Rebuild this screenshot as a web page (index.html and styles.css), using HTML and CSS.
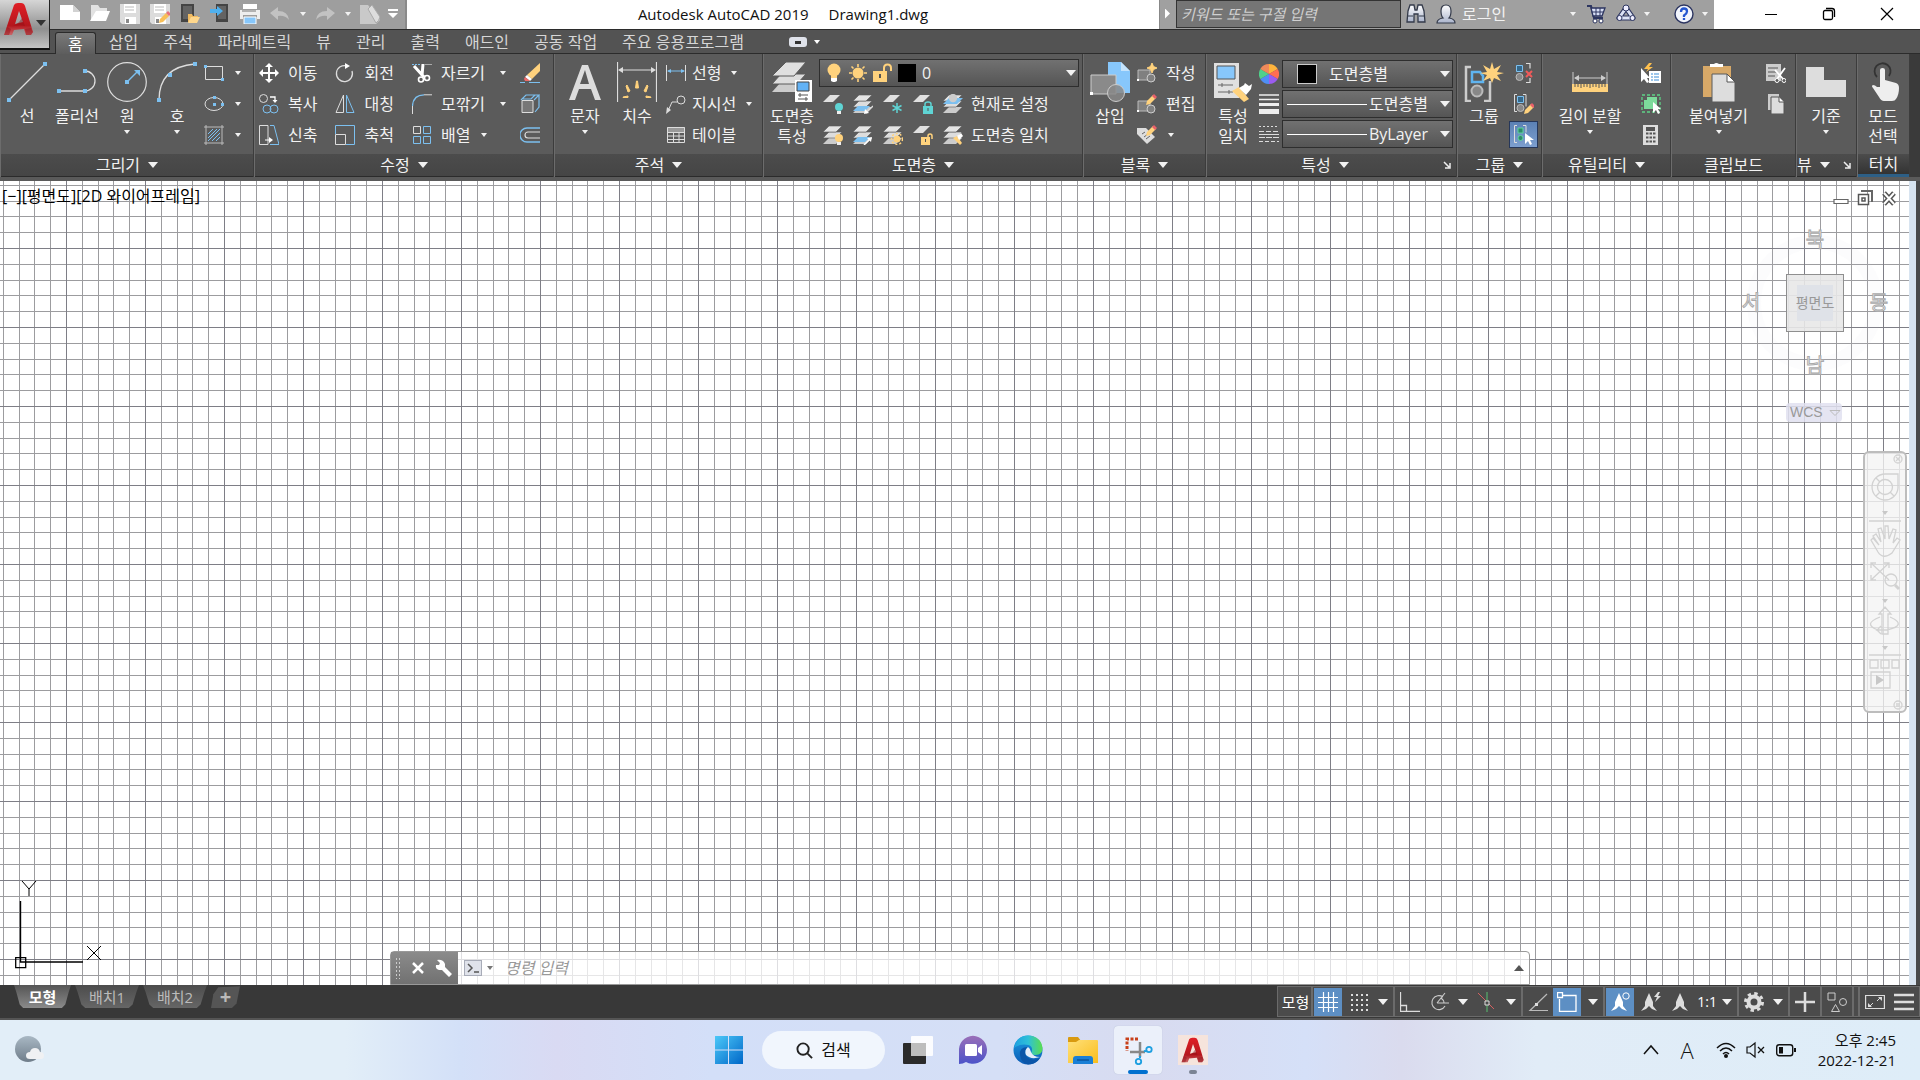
FILE: index.html
```html
<!DOCTYPE html>
<html lang="ko">
<head>
<meta charset="utf-8">
<title>Autodesk AutoCAD 2019 - Drawing1.dwg</title>
<link rel="stylesheet" href="styles.css">
</head>
<body>
<svg class="sprite" aria-hidden="true">
  <defs>
    <linearGradient id="gred" x1="0" y1="0" x2="0" y2="1"><stop offset="0" stop-color="#e01f26"/><stop offset=".7" stop-color="#b5161d"/><stop offset="1" stop-color="#c9686a"/></linearGradient>
    <linearGradient id="gwin" x1="0" y1="0" x2="1" y2="1"><stop offset="0" stop-color="#4cc8f8"/><stop offset="1" stop-color="#0067c8"/></linearGradient>
    <linearGradient id="gchat" x1="0" y1="0" x2="0" y2="1"><stop offset="0" stop-color="#9a6fb8"/><stop offset="1" stop-color="#4b53c9"/></linearGradient>
    <linearGradient id="gedge" x1="0" y1="0" x2="1" y2="0"><stop offset="0" stop-color="#1d9fe0"/><stop offset=".5" stop-color="#2fc0d8"/><stop offset="1" stop-color="#5ade4e"/></linearGradient>
    <linearGradient id="gedge2" x1="0" y1="0" x2="0" y2="1"><stop offset="0" stop-color="#1b9de2"/><stop offset="1" stop-color="#0c5bb5"/></linearGradient>
    <linearGradient id="gfold" x1="0" y1="0" x2="1" y2="1"><stop offset="0" stop-color="#ffe07a"/><stop offset="1" stop-color="#f9bd1c"/></linearGradient>
    <linearGradient id="gmoon" x1="0" y1="0" x2="0" y2="1"><stop offset="0" stop-color="#a9b8c4"/><stop offset="1" stop-color="#6f7d8a"/></linearGradient>
    <linearGradient id="gsteel" x1="0" y1="0" x2="0" y2="1"><stop offset="0" stop-color="#fff"/><stop offset="1" stop-color="#aab4cc"/></linearGradient>
  </defs>
  <symbol id="logo" viewBox="0 0 32 34"><path d="M1 33 11 3q1-2 4-2h3q3 0 4 3l8 26-2 3h-5l-2-6-10 1-2 5zm11-11 8-2-4-11z" fill="url(#gred)"/><path d="M7 25q7-1 12-9l3 8q-6-2-15 1zM1 33l3-8 4 2-2 6zM23 33l-1-6 6-1 2 4-2 3z" fill="#8e0f16" opacity=".45"/></symbol>
  <symbol id="dn" viewBox="0 0 6 4"><path d="M0 0h6L3 4z" fill="currentColor"/></symbol>
  <symbol id="dn2" viewBox="0 0 10 6"><path d="M0 0h10L5 6z" fill="currentColor"/></symbol>
  <symbol id="launch" viewBox="0 0 8 8"><path d="M1 1l5 5M7 2v5H2" fill="none" stroke="#eee" stroke-width="1.5"/></symbol>

  <symbol id="new" viewBox="0 0 20 20"><path d="M0 1h13l7 7v8H0z" fill="#fff"/><path d="M13 1v7h7z" fill="#d2d2d2"/></symbol>
  <symbol id="open" viewBox="0 0 20 20"><path d="M1 17V1h7l2 3h7v3" fill="#e2e2e2"/><path d="M0 17 6 7h14l-4 10z" fill="#fff"/></symbol>
  <symbol id="save" viewBox="0 0 20 20"><path d="M0 0h20v20H2l-2-2z" fill="#dcdcdc"/><path d="M4 0h12v9H4zM5 13h11v7H5z" fill="#fff"/><path d="M6 15h3v4H6z" fill="#888"/><path d="M5 3h9M5 6h9" stroke="#bbb"/></symbol>
  <symbol id="saveas" viewBox="0 0 20 20"><use href="#save"/><path d="m9 19 1-4 6-6 3 3-6 6z" fill="#f8bf57"/><path d="m16 9 2-2 3 3-2 2z" fill="#e8707a"/></symbol>
  <symbol id="webopen" viewBox="0 0 20 20"><rect x="1" width="13" height="18" fill="#444"/><rect x="3" y="2" width="9" height="13" fill="#636363"/><path d="M8 18v-8h4l1 2h5l-1 6z" fill="#f0bb62"/><path d="m8 19 3-6h9l-3 6z" fill="#ffd78c"/></symbol>
  <symbol id="websave" viewBox="0 0 20 20"><rect x="6" width="12" height="18" fill="#444"/><rect x="8" y="2" width="8" height="13" fill="#636363"/><path d="M0 5h7V2l6 5-6 5V9H0z" fill="#4fb0ee"/></symbol>
  <symbol id="print" viewBox="0 0 20 20"><path d="M3 0h14v5H3z" fill="#fff"/><path d="M0 6h20v9h-3v-4H3v4H0z" fill="#eee"/><path d="M2 7h14" stroke="#777"/><path d="M4 13h12v7H4z" fill="#87c7fb" stroke="#fff"/></symbol>
  <symbol id="undo" viewBox="0 0 20 20"><path d="M0 9 8 3v4q10 0 11 9-4-5-11-4v4z" fill="#c2c2c2"/></symbol>
  <symbol id="share" viewBox="0 0 20 20"><path d="M0 1h8l12 15-4 4H0z" fill="#c9c9c9"/><path d="m8 5 4-4 8 12q-1 4-4 6z" fill="#ddd" stroke="#aaa"/></symbol>
  <symbol id="menu2" viewBox="0 0 10 10"><path d="M0 0h10v2H0zM0 4h10L5 9z" fill="#fff"/></symbol>
  <symbol id="binoc" viewBox="0 0 20 20"><path d="m1 18 1-11 2-6h4l1 5h2l1-5h4l2 6 1 11h-7v-8h-4v8z" fill="url(#gsteel)" stroke="#333a4a" stroke-width="1.3"/><path d="M2 12h5M13 12h5" stroke="#333a4a"/></symbol>
  <symbol id="user" viewBox="0 0 20 20"><path d="M1 19q0-4 6-5-2-2-2-7 0-6 5-6t5 6q0 5-2 7 6 1 6 5z" fill="url(#gsteel)" stroke="#333a4a" stroke-width="1.2"/></symbol>
  <symbol id="cart" viewBox="0 0 20 20"><path d="M1 2h4l3 12h9" fill="none" stroke="#2c3560" stroke-width="2"/><path d="M5 4h14l-3 8H7z" fill="#d7def5" stroke="#2c3560" stroke-width="1.3"/><path d="M6 8h11M10 4v8M14 4v8" stroke="#2c3560"/><circle cx="9" cy="17" r="2" fill="#fff" stroke="#2c3560"/><circle cx="15" cy="17" r="2" fill="#fff" stroke="#2c3560"/></symbol>
  <symbol id="a360" viewBox="0 0 20 20"><path d="M10 4 3 14h14z" fill="none" stroke="#2c3560" stroke-width="5" stroke-linejoin="round"/><path d="M10 4 3 14h14z" fill="none" stroke="#dde3f5" stroke-width="3" stroke-linejoin="round"/><circle cx="10" cy="4" r="3" fill="#eef" stroke="#2c3560"/><circle cx="3.500" cy="14" r="2.500" fill="#eef" stroke="#2c3560"/><circle cx="16.500" cy="14" r="2.500" fill="#eef" stroke="#2c3560"/></symbol>
  <symbol id="help" viewBox="0 0 20 20"><circle cx="10" cy="10" r="9" fill="#f2f5fc" stroke="#2c3560" stroke-width="1.4"/><path d="M7 8q0-3.500 3-3.500t3 3q0 2-3 4v1.500M10 14v2" fill="none" stroke="#2456d0" stroke-width="2.300"/></symbol>
  <symbol id="wmin" viewBox="0 0 14 14"><path d="M1 7.500h12" stroke="#000"/></symbol>
  <symbol id="wmax" viewBox="0 0 14 14"><rect x="1.500" y="3.500" width="9" height="9" rx="1.500" fill="none" stroke="#000" stroke-width="1.300"/><path d="M4 1.500h6q2.500 0 2.500 2.500v6" fill="none" stroke="#000" stroke-width="1.300"/></symbol>
  <symbol id="wclose" viewBox="0 0 14 14"><path d="m1 1 12 12M13 1 1 13" stroke="#000" stroke-width="1.200"/></symbol>

  <symbol id="line" viewBox="0 0 40 40"><path d="M2 38 38 2" stroke="#ddd" stroke-width="1.200"/><path d="M0 36h4v4H0zM36 0h4v4h-4z" fill="#7cc0f0"/></symbol>
  <symbol id="pline" viewBox="0 0 40 40"><path d="M2 29h26a10 10 0 0 0 0-20" fill="none" stroke="#ddd" stroke-width="1.300"/><path d="M0 27h4v4H0zM26 27h4v4h-4zM26 7h4v4h-4z" fill="#7cc0f0"/></symbol>
  <symbol id="circle" viewBox="0 0 40 40"><circle cx="20" cy="20" r="19.300" fill="none" stroke="#ddd" stroke-width="1.200"/><path d="m20 20 10-10" stroke="#7cc0f0" stroke-width="1.500"/><path d="M18 18h4v4h-4zM27 8h6v6z" fill="#7cc0f0"/></symbol>
  <symbol id="arc" viewBox="0 0 40 40"><path d="M2 38Q2 5 38 2" fill="none" stroke="#ddd" stroke-width="1.300"/><path d="M0 36h4v4H0zM36 0h4v4h-4zM11 11h4v4h-4z" fill="#7cc0f0"/></symbol>
  <symbol id="rect" viewBox="0 0 20 20"><path d="M1.500 3.500h17v13h-17z" fill="none" stroke="#ddd"/><path d="M0 2h3v3H0zM17 15h3v3h-3z" fill="#7cc0f0"/></symbol>
  <symbol id="ellipse" viewBox="0 0 20 20"><ellipse cx="10" cy="10" rx="9" ry="6.500" fill="none" stroke="#ddd"/><path d="M9 2h3v3H9zM9 9h3v3H9zM17 9h3v3h-3z" fill="#7cc0f0"/></symbol>
  <symbol id="hatch" viewBox="0 0 20 20"><path d="M0 2h20M0 18h20M2 0v20M18 0v20" stroke="#bbb"/><path d="m4 9 5-5M4 13l9-9M4 16 16 4M8 16l8-8M12 16l4-4" stroke="#7cc0f0"/></symbol>
  <symbol id="move" viewBox="0 0 20 20"><path d="M10 2v16M2 10h16" stroke="#fff" stroke-width="2"/><path d="m10 0 4 4H6zM10 20l4-4H6zM0 10l4-4v8zM20 10l-4-4v8z" fill="#fff"/></symbol>
  <symbol id="rotate" viewBox="0 0 20 20"><path d="M12 3a8 8 0 1 0 5 5" fill="none" stroke="#ddd" stroke-width="1.300"/><path d="m10 0 5 3-5 3z" fill="#fff"/></symbol>
  <symbol id="copy" viewBox="0 0 20 20"><circle cx="4.500" cy="4.500" r="4" fill="none" stroke="#ddd"/><path d="M11 3h5v4" fill="none" stroke="#fff" stroke-width="1.300"/><path d="m13.500 6 5 0-2.500 3z" fill="#fff"/><circle cx="8" cy="15" r="4" fill="none" stroke="#7cc0f0"/><circle cx="15" cy="15" r="4" fill="none" stroke="#7cc0f0"/></symbol>
  <symbol id="mirror" viewBox="0 0 20 20"><path d="M8.500 1v17.500H1z" fill="none" stroke="#ddd"/><path d="M11.500 1v17.500H19z" fill="none" stroke="#7cc0f0"/></symbol>
  <symbol id="stretch" viewBox="0 0 20 20"><path d="M9 .5H.5v19H9V.5" fill="none" stroke="#ddd"/><path d="M11 .5h4l5 19h-9" fill="none" stroke="#7cc0f0"/><path d="M6 15h5" stroke="#fff"/><path d="m10 12 4 3-4 3z" fill="#fff"/></symbol>
  <symbol id="scale" viewBox="0 0 20 20"><path d="M.5 9V.5h19v19H11" fill="none" stroke="#7cc0f0"/><path d="M.5 9.500h10v10H.5z" fill="none" stroke="#ddd"/></symbol>
  <symbol id="trim" viewBox="0 0 20 20"><path d="M0 1.500h9" stroke="#7cc0f0" stroke-dasharray="2 1"/><path d="M13 1.500h7" stroke="#aaa"/><path d="M2 3l10 11M11 1 10 13" stroke="#fff" stroke-width="3"/><circle cx="9" cy="16.500" r="2.500" fill="none" stroke="#fff" stroke-width="1.600"/><circle cx="15" cy="15" r="2.500" fill="none" stroke="#fff" stroke-width="1.600"/></symbol>
  <symbol id="fillet" viewBox="0 0 20 20"><path d="M.5 20V12" stroke="#ddd"/><path d="M.5 12Q1 1 12 .8" fill="none" stroke="#7cc0f0" stroke-width="1.300"/><path d="M12 .8h8" stroke="#ddd"/></symbol>
  <symbol id="array" viewBox="0 0 20 20"><path d="M1.500 1.500h7v7h-7z" fill="none" stroke="#ddd"/><path d="M11.500 1.500h7v7h-7zM11.500 11.500h7v7h-7zM1.500 11.500h7v7h-7z" fill="none" stroke="#7cc0f0"/></symbol>
  <symbol id="erase" viewBox="0 0 20 20"><path d="M0 19.500h5M9 19.500h11" stroke="#7cc0f0"/><path d="M20 0v8l-8 8-5-4z" fill="#ffd27d"/><path d="m7 12 5 4-2 2-5-4z" fill="#fff"/><path d="m5 14 5 4H5l-1-2z" fill="#f06a6a"/></symbol>
  <symbol id="explode" viewBox="0 0 20 20"><path d="M2 6.500h11v12H2z" fill="#777" stroke="#ddd"/><path d="m1 6 5-5h13l-5 5M15 18l4-5V1M3 5h8l4-4" fill="none" stroke="#7cc0f0" stroke-width="1.200"/></symbol>
  <symbol id="offset" viewBox="0 0 20 20"><path d="M20 3H7a7 7 0 0 0 0 14h13" fill="none" stroke="#7cc0f0" stroke-width="1.300"/><path d="M20 7H8a3 3 0 0 0 0 6h12" fill="none" stroke="#ddd" stroke-width="1.200"/></symbol>
  <symbol id="bigA" viewBox="0 0 40 40"><path d="M4 38 17 3h6l13 35h-6l-4-11H14l-4 11zm11-16h9L20 8z" fill="#ddd"/></symbol>
  <symbol id="dim" viewBox="0 0 40 40"><path d="M.5 0v40M39.500 0v40M3 8h34" stroke="#ddd" stroke-width="1.200"/><path d="m1 8 5-3v6zM39 8l-5-3v6z" fill="#ddd"/><path d="m18.500 26 1-7h1l1 7zM27 29l3-6 1 1-2 6zM13 29l-3-6-1 1 2 6zM34 35l-5-1 0 1.500h5zM6 35l5-1v1.500H6z" fill="#ffd27d" stroke="#ffd27d"/></symbol>
  <symbol id="lin" viewBox="0 0 20 20"><path d="M.5 2v16M19.500 2v16" stroke="#ddd"/><path d="M2 8h16" stroke="#7cc0f0"/><path d="m1 8 4-2v4zM19 8l-4-2v4z" fill="#7cc0f0"/></symbol>
  <symbol id="leader" viewBox="0 0 20 20"><circle cx="15" cy="6" r="4" fill="none" stroke="#ddd"/><path d="M11 8H6l-4 9" fill="none" stroke="#ddd"/><path d="m0 20 1-7 4 3z" fill="#ddd"/></symbol>
  <symbol id="table" viewBox="0 0 20 20"><path d="M1 2h18v5H1z" fill="#999"/><path d="M1.500 2.500h17v15h-17zM1 7.500h18M1 11h18M1 14.500h18M7.500 7v11M13 7v11" fill="none" stroke="#ddd"/></symbol>
  <symbol id="layers" viewBox="0 0 20 20"><path d="m0 19 6-6h13l-6 6z" fill="#ccc"/><path d="m0 13 6-6h13l-6 6z" fill="#ddd" stroke="#5b5b5b" stroke-width=".6"/><path d="m0 7 6-6h13l-6 6z" fill="#e4e4e4" stroke="#5b5b5b" stroke-width=".6"/></symbol>
  <symbol id="layprop" viewBox="0 0 40 40"><path d="m0 30 9-10h25L25 30z" fill="#ccc"/><path d="m0 22 9-10h25L25 22z" fill="#ddd" stroke="#5b5b5b"/><path d="M0 14 14 0h20L22 14z" fill="#e0e0e0" stroke="#5b5b5b"/><path d="M23 18h17v22H23z" fill="#fff"/><path d="M25 20h12v9H25z" fill="#62b2f5" stroke="#444"/><path d="M26 33h10M26 37h10M28 31v4M34 35v4" stroke="#555"/></symbol>
  <symbol id="bulb" viewBox="0 0 20 20"><circle cx="10" cy="7" r="6.500" fill="#ffd27d"/><path d="M7 11h6v4H7z" fill="#ffd27d"/><path d="M7 15h6v3l-2 1H9l-2-1z" fill="#fff"/></symbol>
  <symbol id="sun" viewBox="0 0 20 20"><circle cx="10" cy="10" r="5.500" fill="#ffd27d"/><path d="M10 1v3M10 16v3M1 10h3M16 10h3M3.500 3.500l2 2M14.500 14.500l2 2M16.500 3.500l-2 2M5.500 14.500l-2 2" stroke="#ffd27d" stroke-width="1.600"/></symbol>
  <symbol id="unlock" viewBox="0 0 20 20"><path d="M1 8h14v11H1z" fill="#ffd27d"/><path d="M12 8V5q0-3.500 3.500-3.500T19 5v3" fill="none" stroke="#ffd27d" stroke-width="2"/><path d="M8 11v4" stroke="#555" stroke-width="2"/></symbol>
  <symbol id="one" viewBox="0 0 20 20"><path d="m0 8 7-7h10l-7 7z" fill="#e0e0e0"/></symbol>
  <symbol id="l1" viewBox="0 0 20 20"><use href="#one"/><circle cx="16" cy="13" r="4" fill="#5fd4d4"/><path d="M14 17h4v3h-4z" fill="#eee"/></symbol>
  <symbol id="l2" viewBox="0 0 20 20"><use href="#layers"/><path d="m0 17 5-5h12l-5 5z" fill="#7cc0f0"/><path d="m20 12-7 7" stroke="#ddd" stroke-width="1.500"/><path d="m11 20 1-5 4 4z" fill="#fff"/></symbol>
  <symbol id="l3" viewBox="0 0 20 20"><use href="#one"/><path d="M14 9v10M9.500 11.500l9 5M9.500 16.500l9-5" stroke="#5fd4d4" stroke-width="1.500"/></symbol>
  <symbol id="l4" viewBox="0 0 20 20"><use href="#one"/><path d="M10 12h10v8H10z" fill="#5fd4d4"/><path d="M12 12v-2q0-2 3-2t3 2v2" fill="none" stroke="#5fd4d4" stroke-width="1.500"/><path d="M15 14v3" stroke="#555"/></symbol>
  <symbol id="l5" viewBox="0 0 20 20"><use href="#layers"/><path d="m0 10 6-6h14l-6 6z" fill="#7cc0f0"/><circle cx="10" cy="4" r="4.200" fill="#ccc"/></symbol>
  <symbol id="l6" viewBox="0 0 20 20"><use href="#layers"/><circle cx="16" cy="13" r="4" fill="#ffd27d"/><path d="M14 17h4v3h-4z" fill="#eee"/></symbol>
  <symbol id="l7" viewBox="0 0 20 20"><use href="#layers"/><path d="m0 17 5-5h12l-5 5z" fill="#7cc0f0"/><path d="m11 20 7-7" stroke="#fff" stroke-width="1.500"/><path d="m19 12-1 5-4-4z" fill="#fff"/></symbol>
  <symbol id="l8" viewBox="0 0 20 20"><use href="#layers"/><circle cx="14" cy="14" r="3.500" fill="#ffd27d"/><circle cx="14" cy="14" r="5.500" fill="none" stroke="#ffd27d" stroke-width="1.500" stroke-dasharray="2 2"/></symbol>
  <symbol id="l9" viewBox="0 0 20 20"><use href="#one"/><path d="M8 12h9v8H8z" fill="#ffd27d"/><path d="M15 13v-2q0-2 2-2t2 2v3" fill="none" stroke="#ffd27d" stroke-width="1.500"/><path d="M12.500 14v3" stroke="#555"/></symbol>
  <symbol id="l10" viewBox="0 0 20 20"><use href="#layers"/><path d="m10 13 4-2 5 7-2 2z" fill="#ffd27d"/><path d="m14 11 4-3 2 3-4 4z" fill="#fff"/></symbol>
  <symbol id="insert" viewBox="0 0 40 40"><path d="M18 0h13l9 9v22H18z" fill="#87c7fb"/><path d="M31 0v9h9z" fill="#c5e3fb"/><path d="M1 13h25v19H1z" fill="#8a8a8a" stroke="#ccc"/><circle cx="26" cy="31" r="8.500" fill="#888" fill-opacity=".85" stroke="#ccc"/><path d="M0 30h3v3H0z" fill="#fff"/></symbol>
  <symbol id="blk" viewBox="0 0 20 20"><path d="M1 7h12v10H1z" fill="#808080" stroke="#bbb"/><circle cx="14" cy="15" r="4" fill="#808080" stroke="#ccc"/><path d="M0 16h2v2H0z" fill="#fff"/></symbol>
  <symbol id="bnew" viewBox="0 0 20 20"><use href="#blk"/><path d="m15 0 1.500 3.500L20 5l-3.500 1.500L15 10l-1.500-3.500L10 5l3.500-1.500z" fill="#ffd27d" stroke="#ffd27d"/></symbol>
  <symbol id="pen" viewBox="0 0 20 20"><path d="m9 11 1-4 6-6 3 3-6 6z" fill="#ffd27d"/><path d="m15 2 2-2 3 3-2 2z" fill="#e8606a"/></symbol>
  <symbol id="bedit" viewBox="0 0 20 20"><use href="#blk"/><use href="#pen"/></symbol>
  <symbol id="battr" viewBox="0 0 20 20"><path d="M0 3h9l9 9-8 7L0 9z" fill="#ddd"/><path d="m5 9 3-2M7 12l4-3M9 14l4-3" stroke="#666"/><use href="#pen"/></symbol>
  <symbol id="matchp" viewBox="0 0 40 40"><path d="M1 1h25v35H1z" fill="#e0e0e0"/><path d="M4 4h18v13H4z" fill="#87c7fb" stroke="#555"/><path d="M5 23h15M5 30h15M9 21v4M16 28v4" stroke="#666"/><path d="m19 29 7-4 10 12-5 3z" fill="#ffd27d"/><path d="m26 26 5-3 1-2 4 3 3-2-1 5-5 6z" fill="#fff"/></symbol>
  <symbol id="wheel" viewBox="0 0 20 20"><path d="M10 10V0a10 10 0 0 1 8.700 5z" fill="#ffb43c"/><path d="m10 10 8.700-5a10 10 0 0 1 0 10z" fill="#ff6e52"/><path d="m10 10 8.700 5A10 10 0 0 1 10 20z" fill="#9b5cf0"/><path d="M10 10v10a10 10 0 0 1-8.700-5z" fill="#4f8ef5"/><path d="m10 10-8.700 5a10 10 0 0 1 0-10z" fill="#4fd08a"/><path d="M10 10 1.300 5A10 10 0 0 1 10 0z" fill="#f0895a"/></symbol>
  <symbol id="lw" viewBox="0 0 20 20"><path d="M0 1h20M0 5.500h20" stroke="#eee" stroke-width="1.500"/><path d="M0 9h20v3H0zM0 15h20v5H0z" fill="#eee"/></symbol>
  <symbol id="lt" viewBox="0 0 20 20"><path d="M0 2.500h20" stroke="#ddd" stroke-dasharray="2 2"/><path d="M0 7.500h20" stroke="#ddd" stroke-dasharray="5 2"/><path d="M0 10.500h20" stroke="#ddd"/><path d="M0 13.500h20" stroke="#ddd" stroke-dasharray="6 1"/><path d="M0 17.500h20" stroke="#ddd" stroke-dasharray="4 2"/></symbol>
  <symbol id="group" viewBox="0 0 40 40"><path d="M7 5H2v34h5M20 39h6V19" fill="none" stroke="#ccc" stroke-width="2.500"/><path d="M8 10h8l3 4v6H8z" fill="none" stroke="#5fb4f0" stroke-width="2.500"/><circle cx="13" cy="29" r="5.500" fill="#888" stroke="#bbb" stroke-width="2"/><path d="m28 0 2 7 7-4-4 7 7 1-7 2 4 6-7-3-2 5-2-5-7 3 4-6-7-2 7-1-4-7 7 4z" fill="#ffd27d"/></symbol>
  <symbol id="g0" viewBox="0 0 20 20"><path d="M2.500 2.500h6v6h-6z" fill="#36688a" stroke="#7cc0f0"/><circle cx="5.500" cy="14" r="3.500" fill="#888" stroke="#bbb"/></symbol>
  <symbol id="g1" viewBox="0 0 20 20"><use href="#g0"/><path d="M12 .5h4v5M16 15v4.500h-4" fill="none" stroke="#ddd" stroke-width="1.200"/><path d="m12 8 6 6M18 8l-6 6" stroke="#f05a5a" stroke-width="2"/></symbol>
  <symbol id="g2" viewBox="0 0 20 20"><path d="M3 .5H.5v17H3M9 .5h3v12" fill="none" stroke="#ddd"/><g transform="translate(1)"><use href="#g0"/></g><g transform="translate(1 9)"><use href="#pen"/></g></symbol>
  <symbol id="g3" viewBox="0 0 20 20"><path d="M3 .5H.5v17H3M9 .5h3v7" fill="none" stroke="#ddd"/><path d="M4 3h5v5H4z" fill="#2f8a6a" stroke="#5fd4a0"/><circle cx="6.500" cy="13" r="2.500" fill="#2f8a6a" stroke="#5fd4a0"/><path d="M11 8v11l3-3 2 4 2-1-2-4h4z" fill="#fff"/></symbol>
  <symbol id="measure" viewBox="0 0 40 40"><path d="M3 10v12M37 10v12M5 16h30" stroke="#ccc"/><path d="m4 16 5-3v6zM36 16l-5-3v6z" fill="#ccc"/><path d="M2 22h36v8H2z" fill="#ffd27d"/><path d="M5 22v3M8 22v3M11 22v4M14 22v3M17 22v3M20 22v4M23 22v3M26 22v3M29 22v4M32 22v3M35 22v3" stroke="#555"/></symbol>
  <symbol id="qsel" viewBox="0 0 20 20"><path d="M8 0 3 6h4L5 9l7-5H8l3-4z" fill="#ffc04d"/><path d="M0 5v14l3-3 3 4 2-1-2-4h3z" fill="#fff"/><path d="M8 8h12v12H8z" fill="#fff"/><path d="M10 11h2M13 11h5M10 14h2M13 14h5M10 17h2M13 17h5" stroke="#3a8ed8"/></symbol>
  <symbol id="selall" viewBox="0 0 20 20"><path d="M1 1h18v17H1z" fill="none" stroke="#5fd488" stroke-dasharray="3 2" stroke-width="1.300"/><path d="M3 6h10v9H3zM6 3h10v9H6z" fill="#7ddb9b"/><path d="M12 8v11l3-3 2 4 2-1-2-4h3z" fill="#fff"/></symbol>
  <symbol id="calc" viewBox="0 0 20 20"><path d="M2 0h15v20H2z" fill="#ddd"/><path d="M5 2h9v4H5z" fill="#555"/><path d="M5 8.500h10M5 12.500h10M5 16.500h10" stroke="#555" stroke-width="2" stroke-dasharray="2.500 1"/></symbol>
  <symbol id="paste" viewBox="0 0 40 40"><path d="M4 4h28v31H4z" fill="#d8a968"/><path d="M11 5V2h4q2-2 5 0h4v3z" fill="#fff"/><path d="M13 12h15l8 8v20H13z" fill="#ddd" stroke="#5b5b5b"/><path d="M28 12v8h8z" fill="#fff" stroke="#555"/></symbol>
  <symbol id="cut" viewBox="0 0 20 20"><path d="M0 1h15v17H0z" fill="#ccc"/><path d="M2 5h10M2 9h9M2 13h7" stroke="#555"/><path d="m9 7 9 10M19 5l-8 11" stroke="#fff" stroke-width="1.800"/><circle cx="11" cy="17.500" r="2" fill="#5b5b5b" stroke="#fff"/><circle cx="18" cy="17.500" r="2" fill="#5b5b5b" stroke="#fff"/></symbol>
  <symbol id="copyclip" viewBox="0 0 20 20"><path d="M2 0h11v16H2z" fill="#ccc"/><path d="M5 3h8l5 5v12H5z" fill="#ddd" stroke="#555"/><path d="M13 3v5h5" fill="#fff" stroke="#555"/></symbol>
  <symbol id="base" viewBox="0 0 40 40"><path d="M0 5h18v13h22v17H0z" fill="#ddd"/></symbol>
  <symbol id="touch" viewBox="0 0 40 40"><path d="M14 15a8 8 0 1 1 12-1" fill="none" stroke="#333" stroke-width="1.800"/><path d="M17 25V8q0-2 2.500-2T22 8v10l11 3q3 1 3 5 0 7-3 11-1 2-4 2h-8q-3 0-5-4l-6-9q-2-2 0-3 2 0 4 2z" fill="#eee"/></symbol>

  <symbol id="vmin" viewBox="0 0 16 16"><path d="M1 9.500h14v4H1z" fill="#fff" stroke="#666" stroke-width="1.200"/></symbol>
  <symbol id="vmax" viewBox="0 0 16 16"><path d="M4 1h11v11" fill="none" stroke="#666" stroke-width="2"/><path d="M1.500 4.500h10v10h-10z" fill="#fff" stroke="#555" stroke-width="1.500"/><path d="M5 8h3v3H5z" fill="#fff" stroke="#555" stroke-width="1.500"/></symbol>
  <symbol id="vclose" viewBox="0 0 16 16"><path d="m3 3 10 11M13 3 3 14" stroke="#555" stroke-width="5"/><path d="m3 3 10 11M13 3 3 14" stroke="#fff" stroke-width="2"/></symbol>

  <symbol id="s-grid" viewBox="0 0 20 20"><path d="M5.500 0v20M10.500 0v20M15.500 0v20M0 5.500h20M0 10.500h20M0 15.500h20" stroke="#fff" stroke-width="1.200"/></symbol>
  <symbol id="s-dots" viewBox="0 0 20 20"><path d="M2 3h18M2 8h18M2 13h18M2 18h18" stroke="#ddd" stroke-width="2" stroke-dasharray="2 3"/></symbol>
  <symbol id="s-ortho" viewBox="0 0 20 20"><path d="M.5 0v19.500H20M.5 13.500h6v6" fill="none" stroke="#ddd" stroke-width="1.300"/></symbol>
  <symbol id="s-polar" viewBox="0 0 20 20"><path d="M16 14a7 7 0 1 1-2-9M8 11h12M8 11l8-10M12 6q3 2 3 5" fill="none" stroke="#ccc" stroke-width="1.100"/></symbol>
  <symbol id="s-iso" viewBox="0 0 20 20"><path d="m1 1 16 16" stroke="#d46060"/><path d="M10 0v20" stroke="#58c070"/><path d="M8 9h4v4H8z" fill="#4a4a4a" stroke="#ddd"/></symbol>
  <symbol id="s-angle" viewBox="0 0 20 20"><path d="M19 2 2 18.500h18" fill="none" stroke="#bbb" stroke-width="1.200"/><path d="M7 11h3v3H7z" fill="#ddd"/></symbol>
  <symbol id="s-osnap" viewBox="0 0 20 20"><path d="M6 3.500h13v16H2.500V7M.5.500h5v5h-5z" fill="none" stroke="#fff" stroke-width="1.300"/></symbol>
  <symbol id="s-a" viewBox="0 0 20 20"><path d="m10 1 4 9v4l4 5-5-2-3-3-3 3-5 2 4-5v-4z" fill="#ddd"/></symbol>
  <symbol id="s-ao" viewBox="0 0 20 20"><path d="m9 1 4 9v4l4 5-5-2-3-3-3 3-5 2 4-5v-4z" fill="#fff"/><circle cx="16" cy="4" r="3.200" fill="none" stroke="#fff"/></symbol>
  <symbol id="s-az" viewBox="0 0 20 20"><path d="m8 1 4 9v4l4 5-5-2-3-3-3 3-5 2 4-5v-4z" fill="#ddd"/><path d="m17 0-4 5h3l-2 5 6-6h-3l2-4z" fill="#ddd"/></symbol>
  <symbol id="s-gear" viewBox="0 0 20 20"><circle cx="10" cy="10" r="5.500" fill="none" stroke="#ddd" stroke-width="4"/><circle cx="10" cy="10" r="8.500" fill="none" stroke="#ddd" stroke-width="3" stroke-dasharray="3.400 3.270"/></symbol>
  <symbol id="s-plus" viewBox="0 0 20 20"><path d="M10 0v20M0 10h20" stroke="#ddd" stroke-width="2.500"/></symbol>
  <symbol id="s-iso2" viewBox="0 0 20 20"><path d="M1 1h7v7H1zM4.500 19.500l4-7 4 7z" fill="none" stroke="#ccc"/><circle cx="16" cy="10" r="3.500" fill="none" stroke="#ccc"/></symbol>
  <symbol id="s-full" viewBox="0 0 20 20"><path d="M.6 3.500h18.800v13H.6z" fill="none" stroke="#ddd" stroke-width="1.200"/><path d="m12 9 3-3M8 11l-3 3" stroke="#ddd"/><path d="M13 5h4v4zM3 15v-4l4 4z" fill="#ddd"/></symbol>
  <symbol id="s-menu" viewBox="0 0 20 20"><path d="M0 3h20M0 10h20M0 17h20" stroke="#ddd" stroke-width="2.500"/></symbol>

  <symbol id="t-moon" viewBox="0 0 30 30"><circle cx="14" cy="14" r="13" fill="url(#gmoon)"/><path d="M16 24q-4 0-4-3.500t4-3.500q1-4 5-4t5 4q4 0 4 3.500T27 24z" fill="#f0f1f3"/></symbol>
  <symbol id="t-win" viewBox="0 0 30 30"><path d="M1 1h13v13.500H1zM15 1h14v13.500H15zM1 15.500h13V29H1zM15 15.500h14V29H15z" fill="url(#gwin)"/></symbol>
  <symbol id="t-find" viewBox="0 0 18 18"><circle cx="7.500" cy="7.500" r="6" fill="none" stroke="#222" stroke-width="2"/><path d="m12 12 5 5" stroke="#222" stroke-width="2"/></symbol>
  <symbol id="t-view" viewBox="0 0 30 30"><rect y="8" width="23" height="21" rx="1" fill="#2b2b2b"/><rect x="8" y="1" width="22" height="20" rx="1" fill="#fff" fill-opacity=".9"/><path d="M8 8h15v13H8z" fill="#bdbdbd"/></symbol>
  <symbol id="t-chat" viewBox="0 0 30 30"><path d="M1 29V14a14 14 0 1 1 7 13q-3 2-7 2z" fill="url(#gchat)"/><rect x="7" y="9" width="12" height="12" rx="1.500" fill="#fff"/><path d="m20 13 4-3v10l-4-3z" fill="#fff"/></symbol>
  <symbol id="t-edge" viewBox="0 0 30 30"><circle cx="15" cy="15" r="14.500" fill="url(#gedge2)"/><path d="M1 13Q3 1 15 .5 28 1 29.500 13q0 7-7 7-5 0-4-3 2-5-3-7-8-2-14.500 3z" fill="url(#gedge)"/><path d="M27 23q-8 4-13-1-4-5 1-10-9 0-8 8 1 8 8 9.500 8 0 12-6.500z" fill="#0b55a8"/><path d="M18 17q-1-4-3-5-4 3-2 8 5 5 14 2-7 0-9-5z" fill="#e5edfa"/></symbol>
  <symbol id="t-fold" viewBox="0 0 30 30"><path d="M0 3q0-1 1-1h9l3 4h-2l-3 2H0z" fill="#d99a10"/><path d="M0 28V7h8l3-2h18q1 0 1 1v22z" fill="url(#gfold)"/><path d="M5 29v-5q0-3 3-3h14q3 0 3 3v5z" fill="#1a7fd6"/><path d="M9 25h12" stroke="#0b559c" stroke-width="1.500"/></symbol>
  <symbol id="t-snip" viewBox="0 0 30 30"><path d="M15 4H4v12" fill="none" stroke="#c8401a" stroke-width="3" stroke-dasharray="3 1.500"/><path d="M17 7v15M7 17h15" stroke="#888" stroke-width="2.500"/><path d="m17 17 6-1M17 17v6" stroke="#1d9fe0" stroke-width="2" stroke-dasharray="0 4 9"/><circle cx="26" cy="14.500" r="2.700" fill="none" stroke="#1d9fe0" stroke-width="1.800"/><circle cx="15.500" cy="26.500" r="2.700" fill="none" stroke="#1d9fe0" stroke-width="1.800"/></symbol>
  <symbol id="t-chev" viewBox="0 0 16 16"><path d="m1 12 7-8 7 8" fill="none" stroke="#111" stroke-width="1.500"/></symbol>
  <symbol id="t-wifi" viewBox="0 0 20 20"><path d="M1 8q9-9 18 0M4 11q6-6 12 0M7 14q3-3 6 0" fill="none" stroke="#111" stroke-width="1.500"/><circle cx="10" cy="16" r="2" fill="#111"/></symbol>
  <symbol id="t-vol" viewBox="0 0 20 20"><path d="M1 7h3l5-4v14l-5-4H1z" fill="none" stroke="#111" stroke-width="1.200"/><path d="m12 7 6 6M18 7l-6 6" stroke="#111" stroke-width="1.300"/></symbol>
  <symbol id="t-bat" viewBox="0 0 20 20"><rect x=".7" y="4.700" width="16" height="11" rx="2.500" fill="none" stroke="#111" stroke-width="1.400"/><path d="M3 7h4v6.500H3zM18 8h2v4h-2z" fill="#111"/></symbol>
</svg>

<header class="titlebar">
  <button class="app" aria-label="응용프로그램 메뉴"><svg class="logo"><use href="#logo"/></svg><svg class="a2"><use href="#dn2"/></svg></button>
  <nav class="qat" aria-label="신속 접근 도구막대">
    <button aria-label="새로 만들기"><svg class="i"><use href="#new"/></svg></button>
    <button aria-label="열기"><svg class="i"><use href="#open"/></svg></button>
    <button aria-label="저장"><svg class="i"><use href="#save"/></svg></button>
    <button aria-label="다른 이름으로 저장"><svg class="i"><use href="#saveas"/></svg></button>
    <button aria-label="웹에서 열기"><svg class="i"><use href="#webopen"/></svg></button>
    <button aria-label="웹에 저장"><svg class="i"><use href="#websave"/></svg></button>
    <button aria-label="플롯"><svg class="i"><use href="#print"/></svg></button>
    <button aria-label="명령 취소"><svg class="i"><use href="#undo"/></svg></button>
    <button class="tiny" aria-label="취소 목록"><svg class="a"><use href="#dn"/></svg></button>
    <button class="flip" aria-label="명령 복구"><svg class="i"><use href="#undo"/></svg></button>
    <button class="tiny" aria-label="복구 목록"><svg class="a"><use href="#dn"/></svg></button>
    <button aria-label="공유"><svg class="i"><use href="#share"/></svg></button>
    <button class="tiny" aria-label="사용자화"><svg class="m"><use href="#menu2"/></svg></button>
  </nav>
  <h1><span>Autodesk AutoCAD 2019</span><span>Drawing1.dwg</span></h1>
  <div class="info">
    <button class="play" aria-label="검색 숨기기"></button>
    <input type="search" aria-label="검색" placeholder="키워드 또는 구절 입력">
    <button aria-label="찾기"><svg class="i"><use href="#binoc"/></svg></button>
    <button class="login"><svg class="i"><use href="#user"/></svg><span>로그인</span><svg class="a"><use href="#dn"/></svg></button>
    <button aria-label="스토어"><svg class="i"><use href="#cart"/></svg></button>
    <button class="pair" aria-label="연결 유지"><svg class="i"><use href="#a360"/></svg><svg class="a"><use href="#dn"/></svg></button>
    <button class="pair help" aria-label="도움말"><svg class="i"><use href="#help"/></svg><svg class="a"><use href="#dn"/></svg></button>
  </div>
  <div class="win">
    <button aria-label="최소화"><svg><use href="#wmin"/></svg></button>
    <button aria-label="이전 크기로"><svg><use href="#wmax"/></svg></button>
    <button aria-label="닫기"><svg><use href="#wclose"/></svg></button>
  </div>
</header>

<nav class="tabs" aria-label="리본 탭">
  <button class="on">홈</button><button>삽입</button><button>주석</button><button>파라메트릭</button><button>뷰</button><button>관리</button><button>출력</button><button>애드인</button><button>공동 작업</button><button>주요 응용프로그램</button>
  <button class="mini" aria-label="리본 최소화"><i></i><svg class="a"><use href="#dn"/></svg></button>
</nav>

<main class="ribbon">
  <section class="panel">
    <div class="body">
      <button class="big"><svg><use href="#line"/></svg>선</button>
      <button class="big"><svg><use href="#pline"/></svg>폴리선</button>
      <button class="big"><svg><use href="#circle"/></svg>원<svg class="a"><use href="#dn"/></svg></button>
      <button class="big"><svg><use href="#arc"/></svg>호<svg class="a"><use href="#dn"/></svg></button>
      <div class="col">
        <button aria-label="직사각형"><svg class="i"><use href="#rect"/></svg><svg class="a"><use href="#dn"/></svg></button>
        <button aria-label="타원"><svg class="i"><use href="#ellipse"/></svg><svg class="a"><use href="#dn"/></svg></button>
        <button aria-label="해치"><svg class="i"><use href="#hatch"/></svg><svg class="a"><use href="#dn"/></svg></button>
      </div>
    </div>
    <h2>그리기<svg class="a2"><use href="#dn2"/></svg></h2>
  </section>
  <section class="panel">
    <div class="body spread">
      <div class="col">
        <button><svg class="i"><use href="#move"/></svg>이동</button>
        <button><svg class="i"><use href="#copy"/></svg>복사</button>
        <button><svg class="i"><use href="#stretch"/></svg>신축</button>
      </div>
      <div class="col">
        <button><svg class="i"><use href="#rotate"/></svg>회전</button>
        <button><svg class="i"><use href="#mirror"/></svg>대칭</button>
        <button><svg class="i"><use href="#scale"/></svg>축척</button>
      </div>
      <div class="col">
        <button><svg class="i"><use href="#trim"/></svg>자르기<svg class="a far"><use href="#dn"/></svg></button>
        <button><svg class="i"><use href="#fillet"/></svg>모깎기<svg class="a far"><use href="#dn"/></svg></button>
        <button><svg class="i"><use href="#array"/></svg>배열<svg class="a"><use href="#dn"/></svg></button>
      </div>
      <div class="col">
        <button aria-label="지우기"><svg class="i"><use href="#erase"/></svg></button>
        <button aria-label="분해"><svg class="i"><use href="#explode"/></svg></button>
        <button aria-label="간격띄우기"><svg class="i"><use href="#offset"/></svg></button>
      </div>
    </div>
    <h2>수정<svg class="a2"><use href="#dn2"/></svg></h2>
  </section>
  <section class="panel">
    <div class="body note">
      <button class="big"><svg><use href="#bigA"/></svg>문자<svg class="a"><use href="#dn"/></svg></button>
      <button class="big"><svg><use href="#dim"/></svg>치수</button>
      <div class="col tight">
        <button><svg class="i"><use href="#lin"/></svg>선형<svg class="a"><use href="#dn"/></svg></button>
        <button><svg class="i"><use href="#leader"/></svg>지시선<svg class="a"><use href="#dn"/></svg></button>
        <button><svg class="i"><use href="#table"/></svg>테이블</button>
      </div>
    </div>
    <h2>주석<svg class="a2"><use href="#dn2"/></svg></h2>
  </section>
  <section class="panel">
    <div class="body layer">
      <button class="big"><svg><use href="#layprop"/></svg>도면층<br>특성</button>
      <div class="col grow">
        <div class="combo"><svg class="i"><use href="#bulb"/></svg><svg class="i"><use href="#sun"/></svg><svg class="i"><use href="#unlock"/></svg><i class="sw"></i><select aria-label="도면층"><option>0</option></select><svg class="a2"><use href="#dn2"/></svg></div>
        <div class="tools">
          <button aria-label="끄기"><svg class="i"><use href="#l1"/></svg></button><button aria-label="분리"><svg class="i"><use href="#l2"/></svg></button><button aria-label="동결"><svg class="i"><use href="#l3"/></svg></button><button aria-label="잠금"><svg class="i"><use href="#l4"/></svg></button><button><svg class="i"><use href="#l5"/></svg>현재로 설정</button>
        </div>
        <div class="tools">
          <button aria-label="켜기"><svg class="i"><use href="#l6"/></svg></button><button aria-label="분리 해제"><svg class="i"><use href="#l7"/></svg></button><button aria-label="동결 해제"><svg class="i"><use href="#l8"/></svg></button><button aria-label="잠금 해제"><svg class="i"><use href="#l9"/></svg></button><button><svg class="i"><use href="#l10"/></svg>도면층 일치</button>
        </div>
      </div>
    </div>
    <h2>도면층<svg class="a2"><use href="#dn2"/></svg></h2>
  </section>
  <section class="panel">
    <div class="body">
      <button class="big"><svg><use href="#insert"/></svg>삽입</button>
      <div class="col">
        <button><svg class="i"><use href="#bnew"/></svg>작성</button>
        <button><svg class="i"><use href="#bedit"/></svg>편집</button>
        <button aria-label="속성 편집"><svg class="i"><use href="#battr"/></svg><svg class="a"><use href="#dn"/></svg></button>
      </div>
    </div>
    <h2>블록<svg class="a2"><use href="#dn2"/></svg></h2>
  </section>
  <section class="panel">
    <div class="body">
      <button class="big"><svg><use href="#matchp"/></svg>특성<br>일치</button>
      <div class="col grow props">
        <div class="prop"><svg class="i"><use href="#wheel"/></svg><div class="combo"><i class="sw edge"></i><select aria-label="색상"><option>도면층별</option></select><svg class="a2"><use href="#dn2"/></svg></div></div>
        <div class="prop"><svg class="i"><use href="#lw"/></svg><div class="combo"><i class="rule"></i><select aria-label="선가중치"><option>도면층별</option></select><svg class="a2"><use href="#dn2"/></svg></div></div>
        <div class="prop"><svg class="i"><use href="#lt"/></svg><div class="combo"><i class="rule"></i><select aria-label="선종류"><option>ByLayer</option></select><svg class="a2"><use href="#dn2"/></svg></div></div>
      </div>
    </div>
    <h2>특성<svg class="a2"><use href="#dn2"/></svg><button aria-label="특성 대화상자"><svg><use href="#launch"/></svg></button></h2>
  </section>
  <section class="panel">
    <div class="body">
      <button class="big"><svg><use href="#group"/></svg>그룹</button>
      <div class="col only">
        <button aria-label="그룹 해제"><svg class="i"><use href="#g1"/></svg></button>
        <button aria-label="그룹 편집"><svg class="i"><use href="#g2"/></svg></button>
        <button class="active" aria-label="그룹 선택"><svg class="i"><use href="#g3"/></svg></button>
      </div>
    </div>
    <h2>그룹<svg class="a2"><use href="#dn2"/></svg></h2>
  </section>
  <section class="panel">
    <div class="body ends wide">
      <button class="big"><svg><use href="#measure"/></svg>길이 분할<svg class="a"><use href="#dn"/></svg></button>
      <div class="col">
        <button aria-label="신속 선택"><svg class="i"><use href="#qsel"/></svg></button>
        <button aria-label="모두 선택"><svg class="i"><use href="#selall"/></svg></button>
        <button aria-label="계산기"><svg class="i"><use href="#calc"/></svg></button>
      </div>
    </div>
    <h2>유틸리티<svg class="a2"><use href="#dn2"/></svg></h2>
  </section>
  <section class="panel">
    <div class="body ends wide">
      <button class="big"><svg><use href="#paste"/></svg>붙여넣기<svg class="a"><use href="#dn"/></svg></button>
      <div class="col">
        <button aria-label="잘라내기"><svg class="i"><use href="#cut"/></svg></button>
        <button aria-label="클립 복사"><svg class="i"><use href="#copyclip"/></svg></button>
      </div>
    </div>
    <h2>클립보드</h2>
  </section>
  <section class="panel">
    <div class="body mid"><button class="big"><svg><use href="#base"/></svg>기준<svg class="a"><use href="#dn"/></svg></button></div>
    <h2 class="snug">뷰<svg class="a2"><use href="#dn2"/></svg><button aria-label="뷰 대화상자"><svg><use href="#launch"/></svg></button></h2>
  </section>
  <section class="panel touch">
    <div class="body mid"><button class="big"><svg><use href="#touch"/></svg>모드<br>선택</button></div>
    <h2>터치</h2>
  </section>
</main>

<section class="drawing">
  <div class="sheet">
    <div class="vp"><button>[−]</button><button>[평면도]</button><button>[2D 와이어프레임]</button></div>
    <div class="vpwin">
      <button aria-label="뷰포트 최소화"><svg><use href="#vmin"/></svg></button>
      <button aria-label="뷰포트 이전 크기"><svg><use href="#vmax"/></svg></button>
      <button aria-label="뷰포트 닫기"><svg><use href="#vclose"/></svg></button>
    </div>
    <div class="cube">
      <span class="n">북</span><span class="w">서</span><button>평면도</button><span class="e">동</span><span class="s">남</span>
    </div>
    <button class="wcs">WCS <svg viewBox="0 0 12 6"><path d="M1 .5h10L6 5.500z" fill="none" stroke="#bbb"/></svg></button>
    <svg class="navbar" viewBox="0 0 44 262" role="img" aria-label="탐색 막대">
      <rect x="1" y="1" width="42" height="260" rx="5" fill="#f4f4f4" fill-opacity=".78" stroke="#bdbdbd" stroke-width="2"/>
      <g fill="none" stroke="#d2d2d2" stroke-width="1.300">
        <circle cx="35" cy="8" r="4"/><path d="m33 6 4 4M37 6l-4 4M6 70h32M6 204h32"/>
        <path d="M22 23h13v14a13 13 0 1 1-13-14z"/><circle cx="22" cy="36" r="7.500"/><path d="m13 27 4 4M31 45l-4-4M13 45l4-4"/>
        <path d="m10 85 3-2 5 8-3-13 3-1 4 11V75h3l1 13 4-10 3 1-3 13 4-5 3 2-8 13q-9 7-14-1L8 89l2-2 6 7z"/>
        <path d="m8 112 18 17M26 112 8 129M8 117v-5h5M21 112h5v5M8 124v5h5"/><circle cx="28" cy="129" r="6"/><path d="m32 134 4 4" stroke-width="3"/>
        <path d="M19 183v-20h-3l6-7 6 7h-3v20zM17 166q-18 7-2 13M27 166q18 8-3 13H14l4-4M14 179l4 4"/>
        <path d="M7 209h8v8H7zM18 209h8v8h-8zM29 209h7v8h-7zM8 221h19v16H8z"/><circle cx="35" cy="254" r="4"/><path d="M33 253h4M33 255h4"/>
      </g>
      <path d="M19 60h6l-3 4zM19 148h6l-3 4zM19 195h6l-3 4zM13 224v10l8-5z" fill="#c8c8c8"/>
    </svg>
    <svg class="ucs" viewBox="0 0 92 90" role="img" aria-label="UCS 아이콘"><path d="M5.500 22v61H68" fill="none" stroke="#000" stroke-width="1.400"/><path d="M.7 78.700h10v10H.7z" fill="none" stroke="#000" stroke-width="1.300"/><path d="m7 2 7 8 7-8M14 10v7M72 67l14 14M86 67 72 81" fill="none" stroke="#000"/></svg>
  </div>
  <div class="cmd">
    <div class="grip"><i></i><button aria-label="닫기"><svg viewBox="0 0 12 12"><path d="m1 1 10 10M11 1 1 11" stroke="#fff" stroke-width="2.500"/></svg></button><button aria-label="사용자화"><svg viewBox="0 0 18 18"><path d="M2 1l3 3-1 2H1q-1 4 3 5h3l7 7 3-3-7-7V5Q8 0 2 1z" fill="#fff"/></svg></button></div>
    <button class="prompt" aria-label="최근 명령"><svg viewBox="0 0 18 16"><rect x=".5" y=".5" width="17" height="15" fill="#dfe2ea" stroke="#a8acb8"/><path d="m4 4 4 4-4 4M10 12h5" fill="none" stroke="#555" stroke-width="1.500"/></svg><svg class="a"><use href="#dn"/></svg></button>
    <input type="text" aria-label="명령" placeholder="명령 입력">
    <button class="up" aria-label="명령 기록"><svg class="a2"><use href="#dn2"/></svg></button>
  </div>
</section>

<footer class="status">
  <nav class="lay" aria-label="배치"><button class="on">모형</button><button>배치1</button><button>배치2</button><button class="add" aria-label="새 배치">+</button></nav>
  <div class="sgroup"><button class="txt">모형</button></div>
  <div class="sgroup"><button class="lit" aria-label="그리드"><svg class="i"><use href="#s-grid"/></svg></button><button aria-label="스냅"><svg class="i"><use href="#s-dots"/></svg></button><svg class="a2"><use href="#dn2"/></svg></div>
  <div class="sgroup"><button aria-label="직교"><svg class="i"><use href="#s-ortho"/></svg></button><button aria-label="극좌표 추적"><svg class="i"><use href="#s-polar"/></svg></button><svg class="a2"><use href="#dn2"/></svg><button aria-label="등각투영"><svg class="i"><use href="#s-iso"/></svg></button><svg class="a2"><use href="#dn2"/></svg></div>
  <div class="sgroup"><button aria-label="객체스냅 추적"><svg class="i"><use href="#s-angle"/></svg></button><button class="lit" aria-label="객체 스냅"><svg class="i"><use href="#s-osnap"/></svg></button><svg class="a2"><use href="#dn2"/></svg></div>
  <div class="sgroup"><button class="lit" aria-label="주석 객체 표시"><svg class="i"><use href="#s-ao"/></svg></button><button aria-label="주석 축척 자동 추가"><svg class="i"><use href="#s-az"/></svg></button><button aria-label="주석 축척"><svg class="i"><use href="#s-a"/></svg></button><button class="txt ratio">1:1</button><svg class="a2"><use href="#dn2"/></svg></div>
  <div class="sgroup"><button aria-label="작업공간"><svg class="i"><use href="#s-gear"/></svg></button><svg class="a2"><use href="#dn2"/></svg></div>
  <div class="sgroup"><button aria-label="주석 감시"><svg class="i"><use href="#s-plus"/></svg></button></div>
  <div class="sgroup iso"><button aria-label="객체 분리"><svg class="i"><use href="#s-iso2"/></svg></button></div>
  <div class="sgroup slim"></div>
  <div class="sgroup"><button aria-label="화면 정리"><svg class="i"><use href="#s-full"/></svg></button><button aria-label="사용자화"><svg class="i"><use href="#s-menu"/></svg></button></div>
</footer>

<footer class="taskbar">
  <div class="left"><button aria-label="날씨"><svg><use href="#t-moon"/></svg></button></div>
  <nav class="apps" aria-label="작업 표시줄">
    <button aria-label="시작"><svg><use href="#t-win"/></svg></button>
    <button class="find"><svg><use href="#t-find"/></svg>검색</button>
    <button aria-label="작업 보기"><svg><use href="#t-view"/></svg></button>
    <button aria-label="채팅"><svg><use href="#t-chat"/></svg></button>
    <button aria-label="Edge"><svg><use href="#t-edge"/></svg></button>
    <button aria-label="파일 탐색기"><svg><use href="#t-fold"/></svg></button>
    <button class="cur" aria-label="캡처 도구"><svg><use href="#t-snip"/></svg></button>
    <button class="run" aria-label="AutoCAD"><svg class="acad"><use href="#logo"/></svg></button>
  </nav>
  <div class="tray">
    <button aria-label="숨겨진 아이콘"><svg class="chev"><use href="#t-chev"/></svg></button>
    <button class="ime">A</button>
    <button class="net" aria-label="네트워크, 소리, 배터리"><svg class="i"><use href="#t-wifi"/></svg><svg class="i"><use href="#t-vol"/></svg><svg class="i"><use href="#t-bat"/></svg></button>
    <button class="clock">오후 2:45<br>2022-12-21</button>
  </div>
</footer>
</body>
</html>
```
FILE: styles.css
```css
* { box-sizing: border-box; }
body {
  margin: 0;
  min-height: 100vh;
  display: flex;
  flex-direction: column;
  font: 16px/20px "Open Sans", "Noto Sans CJK KR", sans-serif;
  color: #f2f2f2;
  background: #383838;
}
button, input, select { font: inherit; color: inherit; border: 0; background: none; padding: 0; margin: 0; }
button { display: flex; align-items: center; white-space: nowrap; }
h1, h2 { margin: 0; font-size: 16px; font-weight: 400; }
svg { flex: none; display: block; }
.sprite { position: absolute; width: 0; height: 0; }
.i { width: 20px; height: 20px; }
.a { width: 6px; height: 4px; }
.a2 { width: 10px; height: 6px; }
.m { width: 10px; height: 10px; }

/* Title bar */
.titlebar { position: relative; display: flex; height: 30px; background: #fff; border-bottom: 1px solid #2b2b2b; }
.app {
  position: absolute; z-index: 2; left: 0; top: 0; width: 50px; height: 50px; padding: 2px 3px 12px; gap: 1px;
  background: linear-gradient(#d6d6d6, #8f8f8f 60%, #c4c4c4);
  border-right: 1px solid #222; border-bottom: 2px solid #111;
}
.app .a2 { color: #333; margin-top: 8px; }
.logo { width: 32px; height: 34px; }
.qat { display: flex; align-items: center; gap: 10px; padding: 0 10px 2px 60px; background: #9e9e9e; border-right: 2px solid #8a8a8a; }
.qat .tiny { width: 5px; justify-content: center; }
.qat .tiny svg { margin: 0 -3px; }
.flip svg { transform: scaleX(-1); }
h1 { flex: 1; display: flex; justify-content: center; align-items: center; gap: 20px; padding-bottom: 2px; color: #111; font-size: 15px; }
.info { display: flex; align-items: center; background: #a0a0a0; gap: 10px; padding: 0 6px 2px 0; border-left: 1px solid #888; }
.play { width: 5px; height: 10px; margin: 0 -4px 0 5px; background: #fff; clip-path: polygon(0 0, 100% 50%, 0 100%); }
.info input { width: 225px; height: 28px; margin-right: -5px; padding: 0 4px; background: #757575; border: 1px solid #333; font-style: italic; font-size: 15px; }
.info input::placeholder { color: #d0d0d0; opacity: 1; }
.login { gap: 6px; width: 140px; }
.login .a { margin-left: auto; }
.pair { gap: 8px; }
.help { margin-left: 14px; }
.win { display: flex; align-items: center; gap: 44px; padding: 0 26px 2px 50px; }
.win svg { width: 14px; height: 14px; }

/* Ribbon tabs */
.tabs { display: flex; gap: 1px; height: 24px; padding-left: 55px; background: #535353; border-bottom: 1px solid #2b2b2b; }
.tabs button { padding: 0 12px; color: #d6d6d6; height: 24px; }
.tabs .on { background: linear-gradient(#7a7a7a, #5d5d5d); color: #fff; border: 1px solid #2b2b2b; border-bottom: 0; margin-top: 2px; height: 22px; border-radius: 3px 3px 0 0; }
.tabs .mini { padding-left: 32px; gap: 7px; color: #fff; }
.mini i { width: 18px; height: 10px; border-radius: 3px; background: linear-gradient(#333, #333) center/6px 3px no-repeat #dfe2ea; }

/* Ribbon panels */
.ribbon {
  display: grid;
  grid-template-columns: 254fr 300fr 209fr 320fr 123fr 251fr 85fr 129fr 125fr 61fr 53fr;
  padding-right: 10px;
  background: #5b5b5b linear-gradient(90deg, transparent calc(100% - 10px), #3a3a3a 0);
  border-bottom: 4px solid #5a5a5a;
}
.panel { min-width: 0; border-right: 1px solid #3c3c3c; box-shadow: inset 1px 0 #6c6c6c; }
.panel h2 { display: flex; align-items: center; justify-content: center; gap: 8px; height: 23px; background: linear-gradient(#4c4c4c, #454545); border-bottom: 1px solid #2b2b2b; margin-left: 1px; }
.panel h2 button { margin-left: auto; margin-right: 5px; }
.panel h2:has(button)::before { content: ""; margin-right: auto; }
.panel h2 button svg { width: 8px; height: 8px; }
.panel .snug::before { display: none; }
.touch h2 { background: linear-gradient(#4c4c4c, #333); border-bottom: 3px solid #2d5f86; }
.body { display: flex; height: 100px; padding-left: 2px; }
.big { flex-direction: column; width: 50px; line-height: 20px; padding-top: 8px; text-align: center; }
.big > svg:first-child { width: 40px; height: 40px; margin-bottom: 4px; }
.big .a { margin-top: 4px; }
.wide .big { width: 92px; }
.col { display: grid; grid-template-rows: repeat(3, 31px); padding: 3px 0 0 2px; align-content: start; }
.col button { gap: 9px; }
.col .a { margin-left: 2px; }
.col .far { margin-left: 6px; }
.spread { gap: 18px; padding-left: 5px; }
.spread .col { padding-left: 0; }
.spread .col:nth-child(3) { margin-right: -4px; }
.note { padding-left: 6px; gap: 2px; }
.tight { padding-left: 2px; }
.tight button { gap: 6px; }
.tight .a { margin-left: 4px; }
.layer { padding-left: 4px; }
.grow { flex: 1; min-width: 0; padding-right: 3px; }
.layer .grow { padding-left: 2px; }
.combo { display: flex; align-items: center; gap: 4px; height: 28px; padding: 0 1px 0 4px; background: linear-gradient(#717171, #555); border: 1px solid #2e2e2e; min-width: 0; flex: 1; align-self: center; }
.combo select { appearance: none; flex: 1; min-width: 0; outline: 0; }
.combo .a2 { pointer-events: none; margin-right: 1px; }
.sw { width: 18px; height: 18px; background: #000; margin: 0 2px; }
.edge { border: 1px solid #ccc; width: 20px; height: 20px; margin: 0 8px 0 10px; }
.rule { width: 80px; height: 1px; background: #fff; margin-right: -2px; }
.tools { display: flex; gap: 10px; padding-left: 4px; }
.tools button { gap: 8px; }
.prop { display: flex; align-items: center; gap: 3px; }
.props { padding-left: 1px; grid-template-rows: repeat(3, 30px); padding-top: 5px; }
.only button { padding-left: 5px; }
.only { padding-left: 0; }
.active { width: 29px; height: 27px; align-self: center; background: linear-gradient(#5a80b4, #7ea0d0); outline: 1px solid #26375a; outline-offset: -1px; }
.ends { justify-content: space-between; padding-right: 9px; }
.mid { justify-content: center; padding-left: 0; }

/* Drawing area */
.drawing { position: relative; flex: 1; min-height: 500px; display: flex; background: #4a4a4a; padding-right: 4px; }
.sheet {
  position: relative; flex: 1; border-right: 7px solid #d8e4f0; background-color: #fff; background-origin: padding-box; background-clip: padding-box;
  background-image:
    linear-gradient(90deg, #7e7e86 1px, transparent 0),
    linear-gradient(#7e7e86 1px, transparent 0),
    linear-gradient(90deg, transparent 16px, #9c9c9f 0 17px, transparent 0 32px, #9c9c9f 0 33px, transparent 0 47px, #9c9c9f 0 48px, transparent 0 63px, #9c9c9f 0 64px, transparent 0),
    linear-gradient(transparent 16px, #9c9c9f 0 17px, transparent 0 32px, #9c9c9f 0 33px, transparent 0 47px, #9c9c9f 0 48px, transparent 0 63px, #9c9c9f 0 64px, transparent 0);
  background-size: 79px 79px;
  background-position: 66px 67px;
}
.vp { display: flex; padding: 5px 2px; color: #000; }
.vpwin { position: absolute; right: 12px; top: 9px; display: flex; gap: 8px; }
.vpwin svg { width: 16px; height: 16px; }
.cube {
  position: absolute; right: 26px; top: 45px; width: 136px; height: 154px; display: grid; place-items: center;
  grid-template: 28px 1fr 28px / 28px 1fr 28px;
  font-size: 20px; color: #fff; -webkit-text-stroke: 1px #a8a8a8;
}
.cube .n, .cube .s { grid-column: 1 / -1; }
.cube::before { content: ""; position: absolute; inset: 9px 0; border: 14px solid rgba(200, 200, 225, .06); border-radius: 50%; }
.cube button { grid-row: 2; grid-column: 2; width: 58px; height: 58px; justify-content: center; font-size: 14px; color: #999; -webkit-text-stroke: 0; background: linear-gradient(#dfe2e8, #dfe2e8) center/36px 36px no-repeat rgba(232, 232, 232, .9); border: 1px solid #8f8f8f; z-index: 1; }
.cube .w { grid-row: 2; margin-left: -20px; }
.cube .e { grid-row: 2; grid-column: 3; margin-right: -20px; }
.wcs { position: absolute; right: 67px; top: 222px; width: 56px; height: 19px; border-radius: 4px; background: rgba(225, 225, 240, .85); color: #999; font: 14px/19px "Liberation Sans", sans-serif; padding-left: 4px; gap: 6px; }
.wcs svg { width: 12px; height: 6px; }
.navbar { position: absolute; right: 2px; top: 270px; width: 44px; height: 262px; }
.ucs { position: absolute; left: 15px; bottom: 16px; width: 92px; height: 90px; }
.cmd { position: absolute; left: 390px; right: 390px; bottom: 0; height: 34px; display: flex; background: rgba(255, 255, 255, .75); border: 1px solid #999; border-radius: 4px 4px 0 0; }
.grip { display: flex; align-items: center; gap: 11px; width: 67px; padding: 0 4px; background: linear-gradient(#8b8b8b, #717171); }
.grip i { width: 6px; height: 22px; background: radial-gradient(#ccc 1px, transparent 0) 0 0/3px 4px; }
.grip button svg { width: 12px; height: 12px; }
.grip button:last-child svg { width: 18px; height: 18px; }
.prompt { gap: 5px; padding: 0 12px 0 6px; color: #777; }
.prompt svg:first-child { width: 18px; height: 16px; }
.cmd input { flex: 1; min-width: 0; font-style: italic; }
.cmd input::placeholder { color: #999; opacity: 1; }
.up { width: 20px; color: #555; justify-content: center; transform: rotate(180deg); }

/* Status bar */
.status { display: flex; height: 35px; padding: 2px 0 3px; background: #383838; border-bottom: 2px solid #555; }
.lay { display: flex; flex: 1; gap: 4px; padding-left: 14px; margin-top: -2px; font-size: 15px; }
.lay button { width: 64px; height: 23px; justify-content: center; color: #bbb; background: linear-gradient(#4c4c4c, #666); clip-path: polygon(0 0, 100% 0, 96% 30%, 90% 85%, 84% 100%, 16% 100%, 10% 85%, 4% 30%); }
.lay .on { width: 57px; color: #fff; font-weight: 700; background: linear-gradient(#555, #8a8a8a); }
.lay .add { width: 29px; font-size: 20px; font-weight: 700; background: #555; clip-path: polygon(25% 10%, 100% 5%, 88% 80%, 72% 100%, 0 100%, 8% 40%); }
.sgroup { display: flex; align-items: center; gap: 9px; height: 31px; margin-top: -1px; padding: 0 5px; background: #4b4b4b; border: 1px solid #6b6b6b; }
.sgroup .lit { background: #5d8fc4; padding: 4px; margin: 0 -2px 0 -4px; }
.sgroup:has(.txt:first-child) { padding: 0 2px 0 4px; }
.txt { font-size: 15px; color: #fff; }
.sgroup .ratio { font-size: 14px; margin: 0 -4px 0 -2px; }
.sgroup.slim { padding: 0 2px; }

/* Windows taskbar */
.taskbar {
  display: grid; grid-template-columns: 1fr auto 1fr; align-items: center; height: 60px; color: #111;
  background: linear-gradient(90deg, #e2eef8, #e2eef8 18%, #d3e0f8 24%, #d9daf3 29%, #d3dff8 37%, #d5dff6 52%, #d8dbf0 60%, #d5e0f8 68%, #dadbee 73%, #e1ecf7 80%, #deedf8);
}
.left { padding-left: 14px; }
.left svg, .apps svg { width: 30px; height: 30px; }
.apps { display: flex; align-items: center; gap: 25px; padding-left: 2px; }
.apps .find { width: 123px; height: 38px; border-radius: 19px; background: #f1f6fd; justify-content: center; gap: 8px; margin: 0 -7px; }
.apps .find svg { width: 17px; height: 17px; }
.apps .cur { position: relative; width: 48px; height: 48px; margin: 0 -9px; justify-content: center; border-radius: 4px; background: #ebf0fa; box-shadow: 0 0 1px #a9b3c8; }
.cur::after, .run::after { content: ""; position: absolute; bottom: 0; left: 14px; width: 20px; height: 4px; border-radius: 2px; background: #0070cf; }
.run { position: relative; }
.run::after { width: 8px; left: 11px; bottom: -9px; background: #7b8494; }
.apps .acad { background: #f6e4dc; padding: 2px; }
.tray { display: flex; justify-content: flex-end; align-items: center; gap: 22px; padding-right: 24px; }
.chev { width: 16px; height: 16px; }
.ime { font-size: 22px; font-weight: 300; }
.net { gap: 10px; }
.clock { display: block; text-align: right; font-size: 15px; line-height: 20px; }
```
